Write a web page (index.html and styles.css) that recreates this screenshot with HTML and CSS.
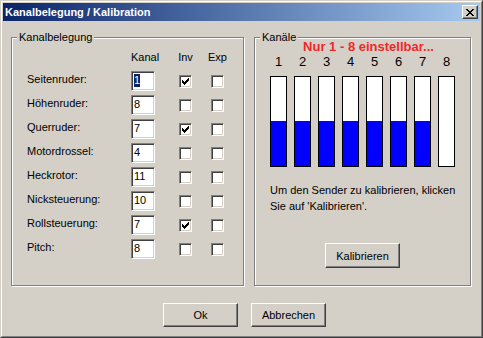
FILE: index.html
```html
<!DOCTYPE html>
<html lang="de">
<head>
<meta charset="utf-8">
<title>Kanalbelegung / Kalibration</title>
<link rel="stylesheet" href="styles.css">
</head>
<body>
<div class="window">
  <div class="frame">
    <div class="titlebar">
      <span class="title">Kanalbelegung / Kalibration</span>
      <button class="close" aria-label="Schließen">
        <svg width="8" height="7" viewBox="0 0 8 7" shape-rendering="crispEdges">
          <rect x="0" y="0" width="2" height="1"/><rect x="6" y="0" width="2" height="1"/>
          <rect x="1" y="1" width="2" height="1"/><rect x="5" y="1" width="2" height="1"/>
          <rect x="2" y="2" width="4" height="1"/>
          <rect x="3" y="3" width="2" height="1"/>
          <rect x="2" y="4" width="4" height="1"/>
          <rect x="1" y="5" width="2" height="1"/><rect x="5" y="5" width="2" height="1"/>
          <rect x="0" y="6" width="2" height="1"/><rect x="6" y="6" width="2" height="1"/>
        </svg>
      </button>
    </div>

    <div class="content">
      <div class="groups">
        <fieldset class="group group-left">
          <legend>Kanalbelegung</legend>
          <div class="grid">
            <div class="hdr hdr-kanal">Kanal</div>
            <div class="hdr hdr-inv"><span>Inv</span></div>
            <div class="hdr hdr-exp"><span>Exp</span></div>

            <div class="lbl">Seitenruder:</div>
            <div class="edit"><span class="sel">1</span></div>
            <div class="chk inv"><svg class="tick" viewBox="0 0 11 11" shape-rendering="crispEdges"><polygon points="2,4 3,4 3,5 4,5 4,6 5,6 5,5 6,5 6,4 7,4 7,3 8,3 8,2 9,2 9,5 8,5 8,6 7,6 7,7 6,7 6,8 5,8 5,9 4,9 4,8 3,8 3,7 2,7"/></svg></div>
            <div class="chk exp"></div>

            <div class="lbl">Höhenruder:</div>
            <div class="edit">8</div>
            <div class="chk inv"></div>
            <div class="chk exp"></div>

            <div class="lbl">Querruder:</div>
            <div class="edit">7</div>
            <div class="chk inv"><svg class="tick" viewBox="0 0 11 11" shape-rendering="crispEdges"><polygon points="2,4 3,4 3,5 4,5 4,6 5,6 5,5 6,5 6,4 7,4 7,3 8,3 8,2 9,2 9,5 8,5 8,6 7,6 7,7 6,7 6,8 5,8 5,9 4,9 4,8 3,8 3,7 2,7"/></svg></div>
            <div class="chk exp"></div>

            <div class="lbl">Motordrossel:</div>
            <div class="edit">4</div>
            <div class="chk inv"></div>
            <div class="chk exp"></div>

            <div class="lbl">Heckrotor:</div>
            <div class="edit">11</div>
            <div class="chk inv"></div>
            <div class="chk exp"></div>

            <div class="lbl">Nicksteuerung:</div>
            <div class="edit">10</div>
            <div class="chk inv"></div>
            <div class="chk exp"></div>

            <div class="lbl">Rollsteuerung:</div>
            <div class="edit">7</div>
            <div class="chk inv"><svg class="tick" viewBox="0 0 11 11" shape-rendering="crispEdges"><polygon points="2,4 3,4 3,5 4,5 4,6 5,6 5,5 6,5 6,4 7,4 7,3 8,3 8,2 9,2 9,5 8,5 8,6 7,6 7,7 6,7 6,8 5,8 5,9 4,9 4,8 3,8 3,7 2,7"/></svg></div>
            <div class="chk exp"></div>

            <div class="lbl">Pitch:</div>
            <div class="edit">8</div>
            <div class="chk inv"></div>
            <div class="chk exp"></div>
          </div>
        </fieldset>

        <fieldset class="group group-right">
          <legend>Kanäle</legend>
          <div class="warn">Nur 1 - 8 einstellbar...</div>
          <div class="nums">
            <span>1</span><span>2</span><span>3</span><span>4</span><span>5</span><span>6</span><span>7</span><span>8</span>
          </div>
          <div class="bars">
            <div class="bar"><div class="fill" style="height:45px"></div></div>
            <div class="bar"><div class="fill" style="height:45px"></div></div>
            <div class="bar"><div class="fill" style="height:45px"></div></div>
            <div class="bar"><div class="fill" style="height:45px"></div></div>
            <div class="bar"><div class="fill" style="height:45px"></div></div>
            <div class="bar"><div class="fill" style="height:45px"></div></div>
            <div class="bar"><div class="fill" style="height:45px"></div></div>
            <div class="bar"><div class="fill" style="height:0px"></div></div>
          </div>
          <p class="hint">Um den Sender zu kalibrieren, klicken<br>Sie auf 'Kalibrieren'.</p>
          <button class="btn btn-cal">Kalibrieren</button>
        </fieldset>
      </div>

      <div class="buttons">
        <button class="btn">Ok</button>
        <button class="btn">Abbrechen</button>
      </div>
    </div>
  </div>
</div>
</body>
</html>
```

FILE: styles.css
```css
* { box-sizing: border-box; }

html, body {
  margin: 0;
  padding: 0;
}

body {
  width: 483px;
  height: 338px;
  overflow: hidden;
  background: #d4d0c8;
  font-family: "Liberation Sans", Arial, sans-serif;
  font-size: 11px;
  color: #000;
}

.window {
  width: 483px;
  height: 338px;
  border: 1px solid;
  border-color: #d4d0c8 #404040 #404040 #d4d0c8;
  background: #d4d0c8;
}

.frame {
  height: 100%;
  border: 1px solid;
  border-color: #fff #808080 #808080 #fff;
  padding: 1px;
  display: flex;
  flex-direction: column;
}

/* title bar */
.titlebar {
  height: 18px;
  flex: none;
  display: flex;
  align-items: center;
  padding: 0 2px 0 2px;
  background: linear-gradient(to right, #0a246a, #a6caf0);
}

.title {
  flex: 1;
  color: #fff;
  font-weight: bold;
  font-size: 11px;
  line-height: 13px;
  white-space: nowrap;
}

.close {
  width: 16px;
  height: 14px;
  margin: 0;
  padding: 0;
  background: #d4d0c8;
  border: 1px solid;
  border-color: #fff #404040 #404040 #fff;
  box-shadow: inset -1px -1px 0 #808080;
  display: flex;
  align-items: center;
  justify-content: center;
}

.close svg { display: block; fill: #000; }

/* content */
.content {
  flex: 1;
  padding: 10px 8px 0 8px;
}

.groups {
  display: flex;
  gap: 10px;
}

.group {
  margin: 0;
  padding: 0;
  min-width: 0;
  height: 255px;
  border: 1px solid #808080;
  box-shadow: inset 1px 1px 0 #fff, 1px 1px 0 #fff;
}

.group-left { width: 233px; }
.group-right { width: 217px; }

.group legend {
  margin-left: 5px;
  padding: 0 2px;
  line-height: 13px;
  background: #d4d0c8;
}

/* left grid */
.grid {
  display: grid;
  grid-template-columns: 104px 24px 24px 13px 19px 13px;
  grid-template-rows: 16px repeat(8, 20px);
  row-gap: 4px;
  margin: 7px 0 0 15px;
}

.hdr {
  line-height: 13px;
  align-self: start;
  white-space: nowrap;
}

.hdr-kanal { grid-column: 2; }

.hdr-inv, .hdr-exp {
  display: flex;
  justify-content: center;
  width: 13px;
}

.hdr-inv { grid-column: 4; }
.hdr-exp { grid-column: 6; }

.lbl {
  grid-column: 1;
  line-height: 16px;
  align-self: start;
  white-space: nowrap;
}

.edit {
  grid-column: 2;
  width: 24px;
  height: 20px;
  padding: 2px 0 0 2px;
  line-height: 13px;
  background: #fff;
  border: 1px solid;
  border-color: #808080 #fff #fff #808080;
  box-shadow: inset 1px 1px 0 #404040, inset -1px -1px 0 #d4d0c8;
}

.sel {
  display: inline-block;
  line-height: 13px;
  background: #0a246a;
  color: #fff;
}

.chk {
  width: 13px;
  height: 13px;
  align-self: center;
  background: #fff;
  border: 1px solid;
  border-color: #808080 #fff #fff #808080;
  box-shadow: inset 1px 1px 0 #404040, inset -1px -1px 0 #d4d0c8;
}

.chk.inv { grid-column: 4; }
.chk.exp { grid-column: 6; }

.tick {
  display: block;
  width: 11px;
  height: 11px;
  fill: #000;
}

/* right group */
.warn {
  margin: -4px 0 0 0;
  padding-left: 12px;
  text-align: center;
  color: #f02828;
  font-weight: bold;
  font-size: 13px;
  line-height: 14px;
  white-space: nowrap;
}

.nums {
  display: flex;
  gap: 7px;
  margin: 1px 0 0 15px;
  font-size: 13px;
  line-height: 14px;
}

.nums span {
  width: 17px;
  text-align: center;
}

.bars {
  display: flex;
  gap: 7px;
  margin: 7px 0 0 15px;
}

.bar {
  width: 17px;
  height: 91px;
  border: 1px solid #000;
  background: #fff;
  display: flex;
  flex-direction: column;
  justify-content: flex-end;
}

.fill {
  background: #0000ff;
}

.hint {
  margin: 15px 0 0 15px;
  line-height: 16px;
  white-space: nowrap;
}

/* buttons */
.btn {
  margin: 0;
  padding: 0;
  width: 75px;
  height: 24px;
  font: inherit;
  color: #000;
  background: #d4d0c8;
  border: 1px solid;
  border-color: #fff #404040 #404040 #fff;
  box-shadow: inset -1px -1px 0 #808080;
}

.btn-cal {
  display: block;
  height: 25px;
  margin: 29px auto 0;
}

.buttons {
  display: flex;
  justify-content: center;
  gap: 13px;
  margin-top: 17px;
  padding-left: 6px;
}
```
